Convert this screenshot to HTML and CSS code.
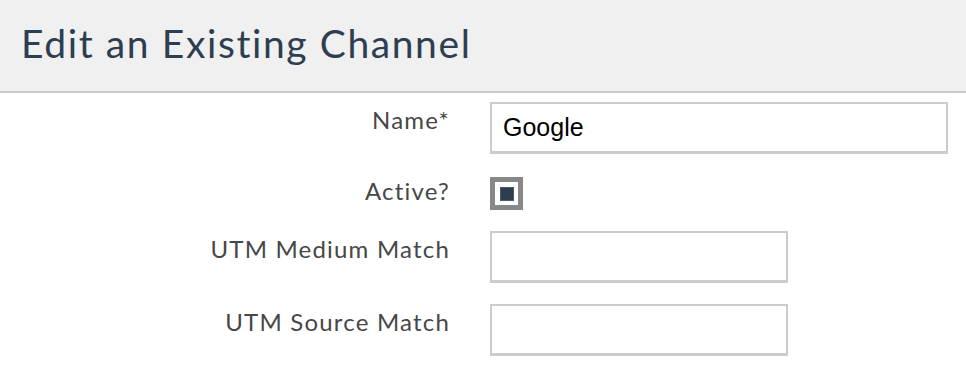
FILE: index.html
```html
<!DOCTYPE html>
<html lang="en">
<head>
<meta charset="utf-8">
<title>Edit an Existing Channel</title>
<link rel="stylesheet" href="styles.css">
</head>
<body>
<header class="page-header">
  <h1 class="title">Edit an Existing Channel</h1>
</header>
<form class="form">
  <label class="label" for="name">Name*</label>
  <div class="field"><input id="name" class="input input-wide" type="text" value="Google"></div>

  <label class="label label-check" for="active">Active?</label>
  <div class="field field-check"><span id="active" class="checkbox"><span class="checkbox-mark"></span></span></div>

  <label class="label" for="medium">UTM Medium Match</label>
  <div class="field"><input id="medium" class="input" type="text"></div>

  <label class="label" for="source">UTM Source Match</label>
  <div class="field"><input id="source" class="input" type="text"></div>
</form>
</body>
</html>
```
FILE: styles.css
```css
html, body {
  margin: 0;
  padding: 0;
  background: #ffffff;
}
body {
  font-family: "Lato", "Liberation Sans", sans-serif;
}
.page-header {
  height: 91px;
  background: #f0f0f0;
  border-bottom: 2px solid #cccccc;
  display: flex;
  align-items: center;
  padding-left: 21px;
}
.title {
  margin: 0;
  font-weight: 400;
  font-size: 39px;
  letter-spacing: 1.6px;
  color: #2c3e50;
  line-height: 1;
  padding-bottom: 4px;
}
.form {
  display: grid;
  grid-template-columns: 449px 1fr;
  column-gap: 41px;
  row-gap: 21px;
  padding-top: 9px;
  align-items: start;
}
.label {
  text-align: right;
  font-size: 24px;
  letter-spacing: 1.2px;
  margin-right: -1px;
  color: #474747;
  line-height: 26px;
  padding-top: 5px;
}
.label-check {
  padding-top: 3px;
}
.field {
  display: flex;
}
.field-check {
  padding-top: 2px;
}
.input {
  box-sizing: border-box;
  width: 298px;
  height: 52px;
  border: 2px solid #cccccc;
  border-bottom-width: 3px;
  background: #fff;
  padding: 0 11px;
  font-family: "Liberation Sans", Arial, sans-serif;
  font-size: 25px;
  color: #000;
  outline: none;
}
.input-wide {
  width: 458px;
}
.checkbox {
  box-sizing: border-box;
  width: 33px;
  height: 33px;
  border: 5px solid #888888;
  background: #fff;
  display: flex;
  align-items: center;
  justify-content: center;
}
.checkbox-mark {
  box-sizing: border-box;
  width: 14px;
  height: 14px;
  background: #2c3e50;
  border: 1px solid #4a5a6b;
}
```
